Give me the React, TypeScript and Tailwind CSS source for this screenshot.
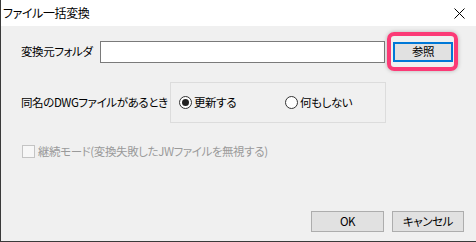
import { ReactNode } from "react";

function Radio({ checked, children }: { checked?: boolean; children: ReactNode }) {
  return (
    <label className="flex items-center gap-[2px]">
      <span className="w-[13px] h-[13px] rounded-full border border-[#333333] bg-white flex items-center justify-center">
        {checked && <span className="w-[7px] h-[7px] rounded-full bg-[#222222]" />}
      </span>
      <span>{children}</span>
    </label>
  );
}

export default function App() {
  return (
    <div
      className="w-[476px] h-[242px] flex flex-col border-l border-b border-[#3a3a3a] text-[11.5px] tracking-[-0.4px] text-black leading-none whitespace-nowrap [font-feature-settings:'palt'] select-none"
      style={{ fontFamily: '"Noto Sans CJK JP", "Noto Sans", sans-serif' }}
    >
      {/* タイトルバー */}
      <div className="h-[26px] shrink-0 bg-white flex items-center justify-between pl-[2px] pr-[11px]">
        <span className="text-[12px]">ファイル一括変換</span>
        <svg width="11" height="11" viewBox="0 0 11 11" className="text-black">
          <path d="M0.5 0.5 L10.5 10.5 M10.5 0.5 L0.5 10.5" stroke="currentColor" strokeWidth="1" />
        </svg>
      </div>

      {/* 本体 */}
      <div className="relative flex-1 bg-[#f0f0f0] flex flex-col pl-[20px]">
        <div className="mt-[15px] flex items-center">
          <span className="w-[79px]">変換元フォルダ</span>
          <div className="w-[285px] h-[22px] bg-white border border-[#7a7a7a]" />
          <button className="ml-[8px] w-[60px] h-[20px] bg-[#e1e1e1] border-2 border-[#0078d7] flex items-center justify-center">
            参照
          </button>
        </div>

        <div className="mt-[19px] flex items-center">
          <span className="w-[149px]">同名のDWGファイルがあるとき</span>
          <div className="w-[216px] h-[41px] border border-[#dcdcdc] flex items-center pl-[8px]">
            <div className="w-[106px]">
              <Radio checked>更新する</Radio>
            </div>
            <Radio>何もしない</Radio>
          </div>
        </div>

        <div className="mt-[22px] ml-[1px] flex items-center gap-[3px] text-[#9a9a9a]">
          <span className="w-[13px] h-[13px] border border-[#c4c4c4] bg-[#f7f7f7]" />
          <span>継続モード(変換失敗したJWファイルを無視する)</span>
        </div>

        <div className="mt-auto mb-[9px] mr-[12px] flex justify-end gap-[8px]">
          <button className="w-[73px] h-[21px] bg-[#e1e1e1] border border-[#adadad] flex items-center justify-center">
            OK
          </button>
          <button className="w-[72px] h-[21px] bg-[#e1e1e1] border border-[#adadad] flex items-center justify-center">
            キャンセル
          </button>
        </div>

        {/* 強調枠 */}
        <div className="absolute left-[386px] top-[6px] w-[71px] h-[39px] rounded-[7px] border-[4px] border-[#fb3a76] shadow-[0_0_4px_rgba(0,0,0,0.25)] pointer-events-none" />
      </div>
    </div>
  );
}
